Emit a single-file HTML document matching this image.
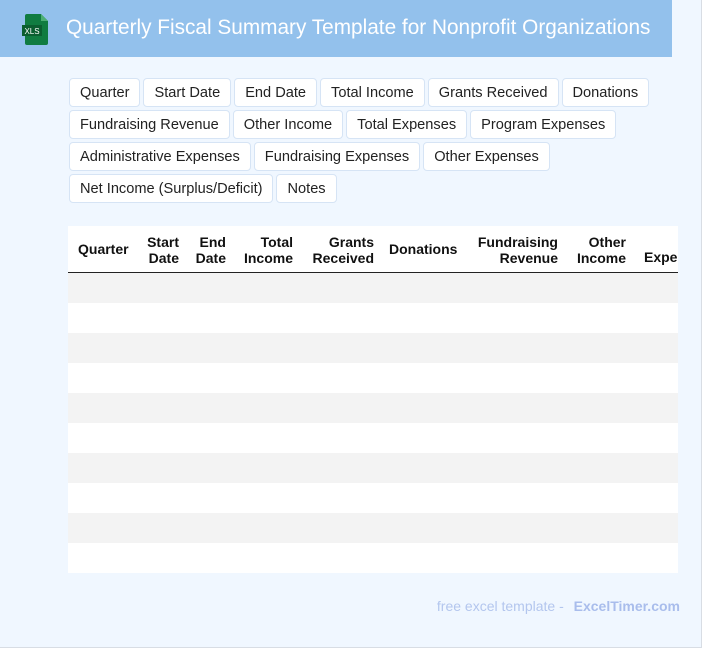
<!DOCTYPE html>
<html><head><style>
*{margin:0;padding:0;box-sizing:border-box}
body{width:702px;height:648px;background:#f0f7ff;font-family:"Liberation Sans",Arial,sans-serif;position:relative;overflow:hidden;border-right:1px solid #d8dde4;border-bottom:1px solid #d8dde4}
.hdr{position:absolute;left:0;top:0;width:672px;height:57px;background:#93c1ec}
.hdr h1{position:absolute;left:66px;top:16px;font-size:20.8px;font-weight:normal;color:#fff;white-space:nowrap}
.chips{position:absolute;left:69px;top:78px;width:600px}
.chip{display:inline-block;height:29px;line-height:28px;padding:0 10px;margin:0 3px 3px 0;background:#fff;border:1px solid #d6e4f5;border-radius:4px;font-size:14.6px;color:#222;white-space:nowrap;vertical-align:top}
.tbl{position:absolute;left:68px;top:226px;width:610px;height:347px;background:#fff;overflow:hidden}
.th{position:absolute;top:8px;font-size:14px;font-weight:bold;line-height:16px;color:#111;white-space:nowrap}
.line{position:absolute;left:0;top:46px;width:610px;height:1px;background:#222}
.row{position:absolute;left:0;width:610px;height:30px}
.foot{position:absolute;right:21px;top:598px;font-size:14px;color:#b3c6ee}
.foot b{color:#a9bdec;margin-left:6px}
</style></head><body>
<div class="hdr">
<svg style="position:absolute;left:21px;top:13px" width="30" height="32" viewBox="0 0 30 32"><path d="M6 1h14l7 7v22a2 2 0 0 1-2 2H6a2 2 0 0 1-2-2V3a2 2 0 0 1 2-2z" fill="#107c41"/><path d="M20 1v7h7z" fill="#4caf74"/><rect x="1" y="12" width="20" height="11" fill="#0b5e30"/><text x="11" y="21" font-size="8" fill="#fff" text-anchor="middle" font-family="Liberation Sans">XLS</text></svg>
<h1>Quarterly Fiscal Summary Template for Nonprofit Organizations</h1>
</div>
<div class="chips">
<span class="chip">Quarter</span><span class="chip">Start Date</span><span class="chip">End Date</span><span class="chip">Total Income</span><span class="chip">Grants Received</span><span class="chip">Donations</span><br>
<span class="chip">Fundraising Revenue</span><span class="chip">Other Income</span><span class="chip">Total Expenses</span><span class="chip">Program Expenses</span><br>
<span class="chip">Administrative Expenses</span><span class="chip">Fundraising Expenses</span><span class="chip">Other Expenses</span><br>
<span class="chip">Net Income (Surplus/Deficit)</span><span class="chip">Notes</span>
</div>
<div class="tbl">
<div class="th" style="left:10px;top:15px">Quarter</div>
<div class="th" style="right:499px;text-align:right">Start<br>Date</div>
<div class="th" style="right:452px;text-align:right">End<br>Date</div>
<div class="th" style="right:385px;text-align:right">Total<br>Income</div>
<div class="th" style="right:304px;text-align:right">Grants<br>Received</div>
<div class="th" style="left:321px;top:15px">Donations</div>
<div class="th" style="right:120px;text-align:right">Fundraising<br>Revenue</div>
<div class="th" style="right:52px;text-align:right">Other<br>Income</div>
<div class="th" style="left:576px;top:23px">Expe</div>
<div class="line"></div>
<div class="row" style="top:47px;background:#f3f3f3"></div>
<div class="row" style="top:107px;background:#f3f3f3"></div>
<div class="row" style="top:167px;background:#f3f3f3"></div>
<div class="row" style="top:227px;background:#f3f3f3"></div>
<div class="row" style="top:287px;background:#f3f3f3"></div>
</div>
<div class="foot">free excel template - <b>ExcelTimer.com</b></div>
</body></html>
